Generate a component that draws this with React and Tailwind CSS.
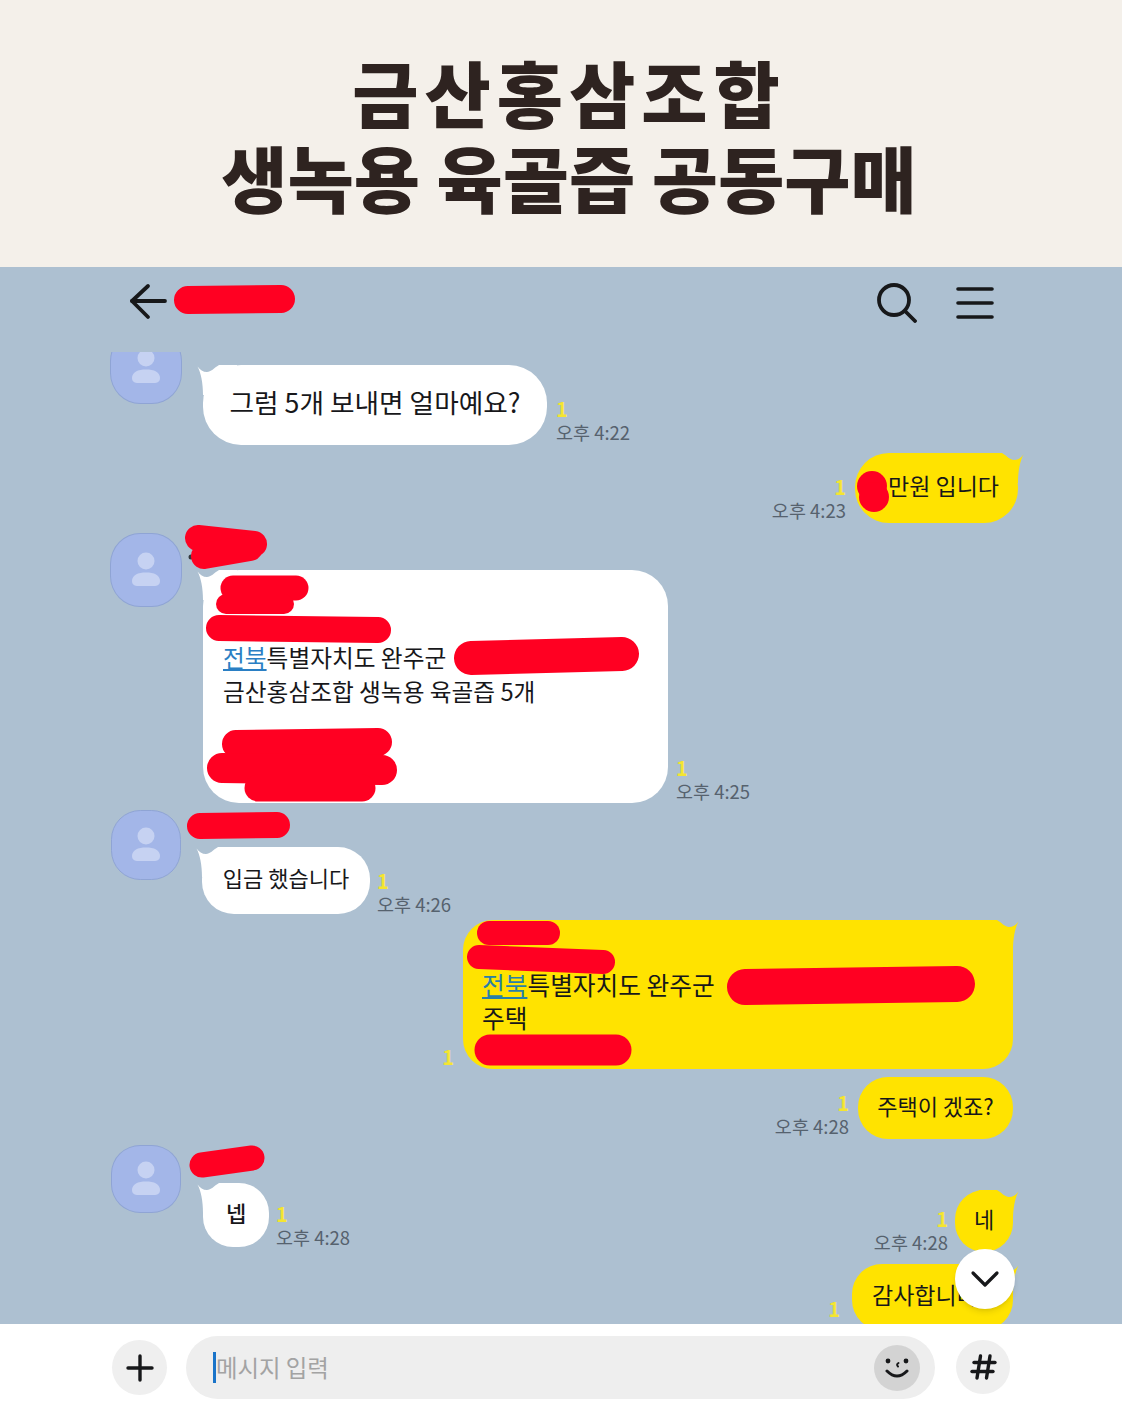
const FONT = "font-['Noto_Sans_CJK_KR','Noto_Sans',sans-serif]";

function Tail({ side, color }) {
  const pos = side === "left" ? "-left-[6px] top-0" : "-right-[6px] top-0 -scale-x-100";
  return (
    <svg className={`absolute ${pos}`} width="40" height="30" viewBox="0 0 40 30">
      <path d="M0.5 1.5 C3 5 6 7 10 7 C14 7 17 3 22 0 L40 0 L40 30 L6 30 C6 18 4 8 0.5 1.5Z" fill={color} />
    </svg>
  );
}

function Avatar({ w, h, mt = "" }) {
  return (
    <div className={`shrink-0 ${w} ${h} ${mt} rounded-[42%] bg-[#a3b6e8] border border-[#8fa4d4] flex items-center justify-center`}>
      <svg width="36" height="38" viewBox="0 0 36 38">
        <circle cx="18" cy="10" r="8.5" fill="#c6d2f2" />
        <path d="M4 30 C4 24 10 21.5 18 21.5 C26 21.5 32 24 32 30 C32 34 29 35 26 35 L10 35 C7 35 4 34 4 30Z" fill="#c6d2f2" />
      </svg>
    </div>
  );
}

function Meta({ time, align = "left" }) {
  return (
    <div className={`flex flex-col ${align === "left" ? "items-start" : "items-end"}`}>
      <span className="text-[20px] leading-[22px] text-[#f4e531] font-semibold">1</span>
      {time && <span className="text-[18.5px] leading-[24px] text-[#56626e] whitespace-nowrap">{time}</span>}
    </div>
  );
}

const PANEL = "relative flex items-center whitespace-nowrap text-[#17171a] pb-[6px]";

export default function App() {
  return (
    <div className={`relative w-[1122px] h-[1402px] overflow-hidden ${FONT}`}>
      <header className="h-[267px] bg-[#f4f0ea] flex flex-col items-center pt-[48px] pl-[16px] text-[#2e2320] font-black text-[72px] leading-[85px]">
        <h1 className="tracking-[6px] whitespace-nowrap">금산홍삼조합</h1>
        <h1 className="whitespace-nowrap tracking-[0px]">생녹용 육골즙 공동구매</h1>
      </header>

      <main className="h-[1057px] bg-[#adc0d1] flex flex-col">
        <nav className="h-[85px] shrink-0 flex items-start pt-[16px] pl-[128px] pr-[128px] justify-between">
          <svg width="42" height="40" viewBox="0 0 42 40" fill="none" stroke="#17181a" strokeWidth="3.8" strokeLinecap="round" strokeLinejoin="round">
            <path d="M20 3 L4 18 L20 34" />
            <path d="M4 18 H37" />
          </svg>
          <div className="flex items-center gap-[39px]">
            <svg width="40" height="40" viewBox="0 0 40 40" fill="none" stroke="#17181a" strokeWidth="3.8" strokeLinecap="round">
              <circle cx="17" cy="17" r="15" />
              <path d="M28 28 L38 38" />
            </svg>
            <svg width="38" height="34" viewBox="0 0 38 34" fill="none" stroke="#17181a" strokeWidth="3.6" strokeLinecap="round">
              <path d="M2 3 H36" />
              <path d="M2 17 H36" />
              <path d="M2 31 H36" />
            </svg>
          </div>
        </nav>

        <section className="flex-1 overflow-hidden flex flex-col pl-[110px] pr-[104px] text-[#17171a]">
          {/* 4:22 */}
          <div className="flex items-start -mt-[22px] shrink-0">
            <Avatar w="w-[72px]" h="h-[74px]" />
            <div className={`${PANEL} ml-[21px] mt-[35px] w-[344px] h-[80px] rounded-[38px] bg-white justify-center text-[26.7px]`}>
              <Tail side="left" color="#ffffff" />
              <span className="relative">그럼 5개 보내면 얼마예요?</span>
            </div>
            <div className="self-end ml-[9px] mb-[1px]"><Meta time="오후 4:22" /></div>
          </div>

          {/* 4:23 */}
          <div className="flex justify-end items-end mt-[8px] shrink-0">
            <div className="mr-[9px] mb-[1px]"><Meta time="오후 4:23" align="right" /></div>
            <div className={`${PANEL} w-[163px] h-[70px] rounded-[34px] bg-[#ffe300] justify-end pr-[19px] text-[23px]`}>
              <Tail side="right" color="#ffe300" />
              <span className="relative">만원 입니다</span>
            </div>
          </div>

          {/* 4:25 */}
          <div className="flex items-start mt-[10px] shrink-0">
            <Avatar w="w-[72px]" h="h-[74px]" />
            <div className="relative ml-[21px] mt-[37px] w-[465px] h-[233px] rounded-[36px] bg-white pl-[20px] pt-[70px] text-[23.7px] leading-[34px] whitespace-nowrap">
              <Tail side="left" color="#ffffff" />
              <p className="relative"><span className="text-[#2a7fc4] underline underline-offset-2">전북</span>특별자치도 완주군</p>
              <p className="relative">금산홍삼조합 생녹용 육골즙 5개</p>
            </div>
            <div className="self-end ml-[8px]"><Meta time="오후 4:25" /></div>
          </div>

          {/* 4:26 */}
          <div className="flex items-start mt-[7px] shrink-0 pl-[1px]">
            <Avatar w="w-[70px]" h="h-[70px]" />
            <div className={`${PANEL} ml-[21px] mt-[37px] w-[168px] h-[67px] rounded-[32px] bg-white justify-center text-[22px]`}>
              <Tail side="left" color="#ffffff" />
              <span className="relative">입금 했습니다</span>
            </div>
            <div className="self-end ml-[7px] -mb-[2px]"><Meta time="오후 4:26" /></div>
          </div>

          {/* address */}
          <div className="flex justify-end items-end mt-[6px] pr-[5px] shrink-0">
            <div className="mr-[9px] mb-[1px]"><Meta /></div>
            <div className="relative w-[550px] h-[149px] rounded-[30px] bg-[#ffe300] pl-[19px] pt-[48px] text-[24.7px] leading-[33px] whitespace-nowrap">
              <Tail side="right" color="#ffe300" />
              <p className="relative"><span className="text-[#2a7fa8] underline underline-offset-2">전북</span>특별자치도 완주군</p>
              <p className="relative">주택</p>
            </div>
          </div>

          {/* 4:28 */}
          <div className="flex justify-end items-end mt-[8px] pr-[5px] shrink-0">
            <div className="mr-[9px] mb-[1px]"><Meta time="오후 4:28" align="right" /></div>
            <div className={`${PANEL} w-[155px] h-[62px] rounded-[30px] bg-[#ffe300] justify-center text-[22px]`}>
              주택이 겠죠?
            </div>
          </div>

          {/* last group */}
          <div className="flex justify-between items-start mt-[6px] pr-[5px] shrink-0">
            <div className="flex items-start pl-[1px]">
              <Avatar w="w-[70px]" h="h-[68px]" />
              <div className={`${PANEL} ml-[22px] mt-[38px] w-[66px] h-[64px] rounded-[30px] bg-white justify-center text-[22px] font-medium`}>
                <Tail side="left" color="#ffffff" />
                <span className="relative">넵</span>
              </div>
              <div className="self-end ml-[7px] -mb-[2px]"><Meta time="오후 4:28" /></div>
            </div>
            <div className="flex flex-col items-end pt-[45px]">
              <div className="flex items-end">
                <div className="mr-[7px] -mb-[2px]"><Meta time="오후 4:28" align="right" /></div>
                <div className={`${PANEL} w-[58px] h-[62px] rounded-[29px] bg-[#ffe300] justify-center text-[22px]`}>
                  <Tail side="right" color="#ffe300" />
                  <span className="relative">네</span>
                </div>
              </div>
              <div className="flex items-center mt-[12px]">
                <div className="mr-[12px] mt-[24px]"><Meta /></div>
                <div className={`${PANEL} w-[161px] h-[66px] rounded-[30px] bg-[#ffe300] pl-[20px] text-[23px]`}>
                  <Tail side="right" color="#ffe300" />
                  <span className="relative">감사합니다</span>
                </div>
              </div>
            </div>
          </div>
        </section>
      </main>

      <footer className="h-[78px] bg-white flex items-start pl-[112px] pt-[12px]">
        <div className="w-[55px] h-[55px] mt-[4px] rounded-full bg-[#efefef] flex items-center justify-center">
          <svg width="28" height="28" viewBox="0 0 28 28" stroke="#17181a" strokeWidth="3.4" strokeLinecap="round">
            <path d="M14 2 V26" />
            <path d="M2 14 H26" />
          </svg>
        </div>
        <div className="ml-[19px] w-[749px] h-[63px] rounded-full bg-[#eeeeee] flex items-center pl-[27px] pr-[15px]">
          <span className="w-[3px] h-[31px] bg-[#1a74c9]" />
          <span className="text-[23.4px] text-[#a3a3a3] leading-none">메시지 입력</span>
          <div className="ml-auto w-[46px] h-[46px] rounded-full bg-[#d3d3d3] flex items-center justify-center">
            <svg width="30" height="30" viewBox="0 0 30 30" fill="none" stroke="#17181a" strokeLinecap="round">
              <circle cx="6" cy="8" r="2.4" fill="#17181a" stroke="none" />
              <circle cx="24" cy="8" r="2.4" fill="#17181a" stroke="none" />
              <path d="M16.5 10 Q14 11.5 16 13.5" strokeWidth="2" />
              <path d="M5 18 Q15 28 25 18" strokeWidth="3" />
            </svg>
          </div>
        </div>
        <div className="ml-[21px] w-[54px] h-[54px] mt-[4px] rounded-full bg-[#efefef] flex items-center justify-center">
          <svg width="28" height="28" viewBox="0 0 28 28" stroke="#17181a" strokeWidth="3.4" strokeLinecap="round">
            <path d="M11.5 3 L8 25" />
            <path d="M21 3 L17.5 25" />
            <path d="M5 9.5 H26" />
            <path d="M3 18.5 H24" />
          </svg>
        </div>
      </footer>

      {/* scroll-to-bottom button */}
      <div className="absolute left-[955px] top-[1249px] w-[60px] h-[60px] rounded-full bg-white shadow-md flex items-center justify-center">
        <svg width="30" height="18" viewBox="0 0 30 18" fill="none" stroke="#17181a" strokeWidth="3.2" strokeLinecap="round" strokeLinejoin="round">
          <path d="M3 3 L15 15 L27 3" />
        </svg>
      </div>

      {/* red marker strokes over private details */}
      <svg className="absolute left-0 top-0 pointer-events-none" width="1122" height="1402" viewBox="0 0 1122 1402" fill="none" stroke="#ff0022" strokeLinecap="round">
        <circle cx="191" cy="557" r="2.5" fill="#33383c" stroke="none" />
        <path d="M188 300 L281 299" strokeWidth="28" />
        <circle cx="872" cy="486" r="15" fill="#ff0022" stroke="none" />
        <circle cx="874" cy="497" r="15" fill="#ff0022" stroke="none" />
        <path d="M198 538 L254 544" strokeWidth="26" />
        <path d="M204 556 L250 548" strokeWidth="26" />
        <path d="M233 588 L296 588" strokeWidth="25" />
        <path d="M226 604 L284 604" strokeWidth="20" />
        <path d="M219 628 L378 630" strokeWidth="26" />
        <path d="M471 658 L622 654" strokeWidth="34" />
        <path d="M236 744 L378 742" strokeWidth="28" />
        <path d="M222 768 L382 770" strokeWidth="30" />
        <path d="M258 788 L362 788" strokeWidth="27" />
        <path d="M200 826 L277 825" strokeWidth="26" />
        <path d="M489 933 L548 933" strokeWidth="24" />
        <path d="M479 957 L603 962" strokeWidth="24" />
        <path d="M745 987 L957 984" strokeWidth="36" />
        <path d="M490 1050 L616 1050" strokeWidth="31" />
        <path d="M202 1165 L252 1158" strokeWidth="25" />
      </svg>
    </div>
  );
}
